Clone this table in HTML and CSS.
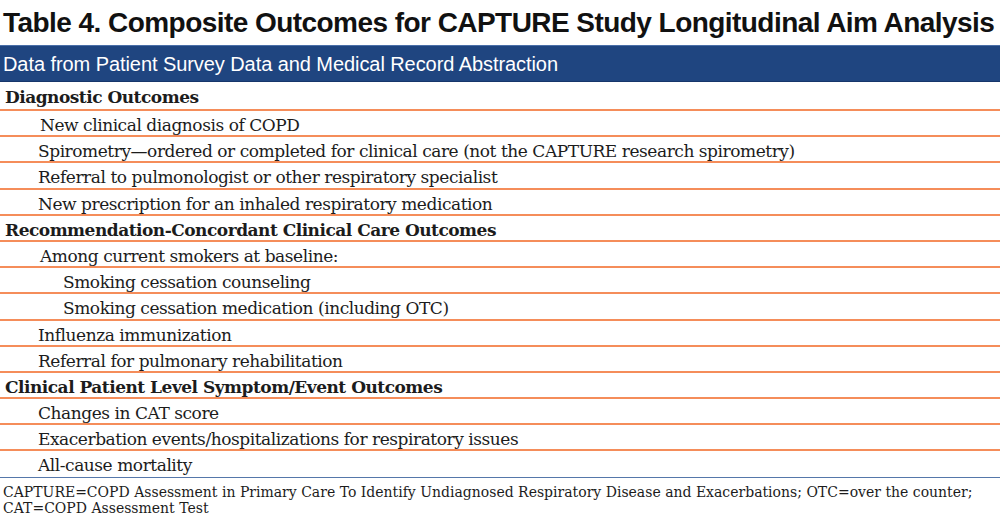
FILE: index.html
```html
<!DOCTYPE html>
<html lang="en">
<head>
<meta charset="utf-8">
<title>Table 4</title>
<link rel="stylesheet" href="styles.css">
</head>
<body>
<div class="page">
  <h1 class="title">Table 4. Composite Outcomes for CAPTURE Study Longitudinal Aim Analysis</h1>
  <div class="subtitle">Data from Patient Survey Data and Medical Record Abstraction</div>
  <div class="rows">
    <div class="row head first">Diagnostic Outcomes</div>
    <div class="row l1 nudge">New clinical diagnosis of COPD</div>
    <div class="row l1">Spirometry—ordered or completed for clinical care (not the CAPTURE research spirometry)</div>
    <div class="row l1">Referral to pulmonologist or other respiratory specialist</div>
    <div class="row l1">New prescription for an inhaled respiratory medication</div>
    <div class="row head">Recommendation-Concordant Clinical Care Outcomes</div>
    <div class="row l1 nudge">Among current smokers at baseline:</div>
    <div class="row l2">Smoking cessation counseling</div>
    <div class="row l2">Smoking cessation medication (including OTC)</div>
    <div class="row l1">Influenza immunization</div>
    <div class="row l1">Referral for pulmonary rehabilitation</div>
    <div class="row head">Clinical Patient Level Symptom/Event Outcomes</div>
    <div class="row l1">Changes in CAT score</div>
    <div class="row l1">Exacerbation events/hospitalizations for respiratory issues</div>
    <div class="row l1 last">All-cause mortality</div>
  </div>
  <p class="footnote">CAPTURE=COPD Assessment in Primary Care To Identify Undiagnosed Respiratory Disease and Exacerbations; OTC=over the counter;<br>CAT=COPD Assessment Test</p>
</div>
</body>
</html>
```

FILE: styles.css
```css
html, body {
  margin: 0;
  padding: 0;
  background: #ffffff;
}
.page {
  width: 1000px;
  height: 522px;
  overflow: hidden;
  display: flex;
  flex-direction: column;
}
.title {
  margin: 0;
  padding: 7px 0 6px 3px;
  height: 32px;
  font-family: "Liberation Sans", Arial, sans-serif;
  font-weight: bold;
  font-size: 28px;
  letter-spacing: -0.55px;
  line-height: 32px;
  color: #111111;
  white-space: nowrap;
}
.subtitle {
  box-sizing: border-box;
  height: 37px;
  padding: 2px 0 0 3px;
  background: #1f4580;
  border-top: 1px solid #4a6fa8;
  border-bottom: 1px solid #16356a;
  font-family: "Liberation Sans", Arial, sans-serif;
  font-size: 20px;
  letter-spacing: -0.07px;
  line-height: 33px;
  color: #ffffff;
  white-space: nowrap;
}
.rows {
  display: flex;
  flex-direction: column;
}
.row {
  box-sizing: border-box;
  height: 26.2px;
  padding-top: 4px;
  border-bottom: 2px solid #f58d5a;
  font-family: "DejaVu Serif", serif;
  font-size: 17px;
  letter-spacing: -0.45px;
  line-height: 20px;
  color: #1c1c1c;
  white-space: nowrap;
}
.row.first {
  height: 29px;
  padding-top: 4px;
  line-height: 23px;
}
.row.last {
  border-bottom: 1px solid #5577aa;
}
.head {
  font-weight: bold;
  letter-spacing: -0.5px;
  padding-left: 5px;
}
.l1 {
  padding-left: 38px;
}
.l1.nudge {
  padding-left: 40px;
}
.l2 {
  padding-left: 63px;
}
.footnote {
  margin: 0;
  padding: 6px 0 0 3px;
  font-family: "DejaVu Serif", serif;
  font-size: 14px;
  line-height: 16.5px;
  color: #1c1c1c;
  white-space: nowrap;
}
```
